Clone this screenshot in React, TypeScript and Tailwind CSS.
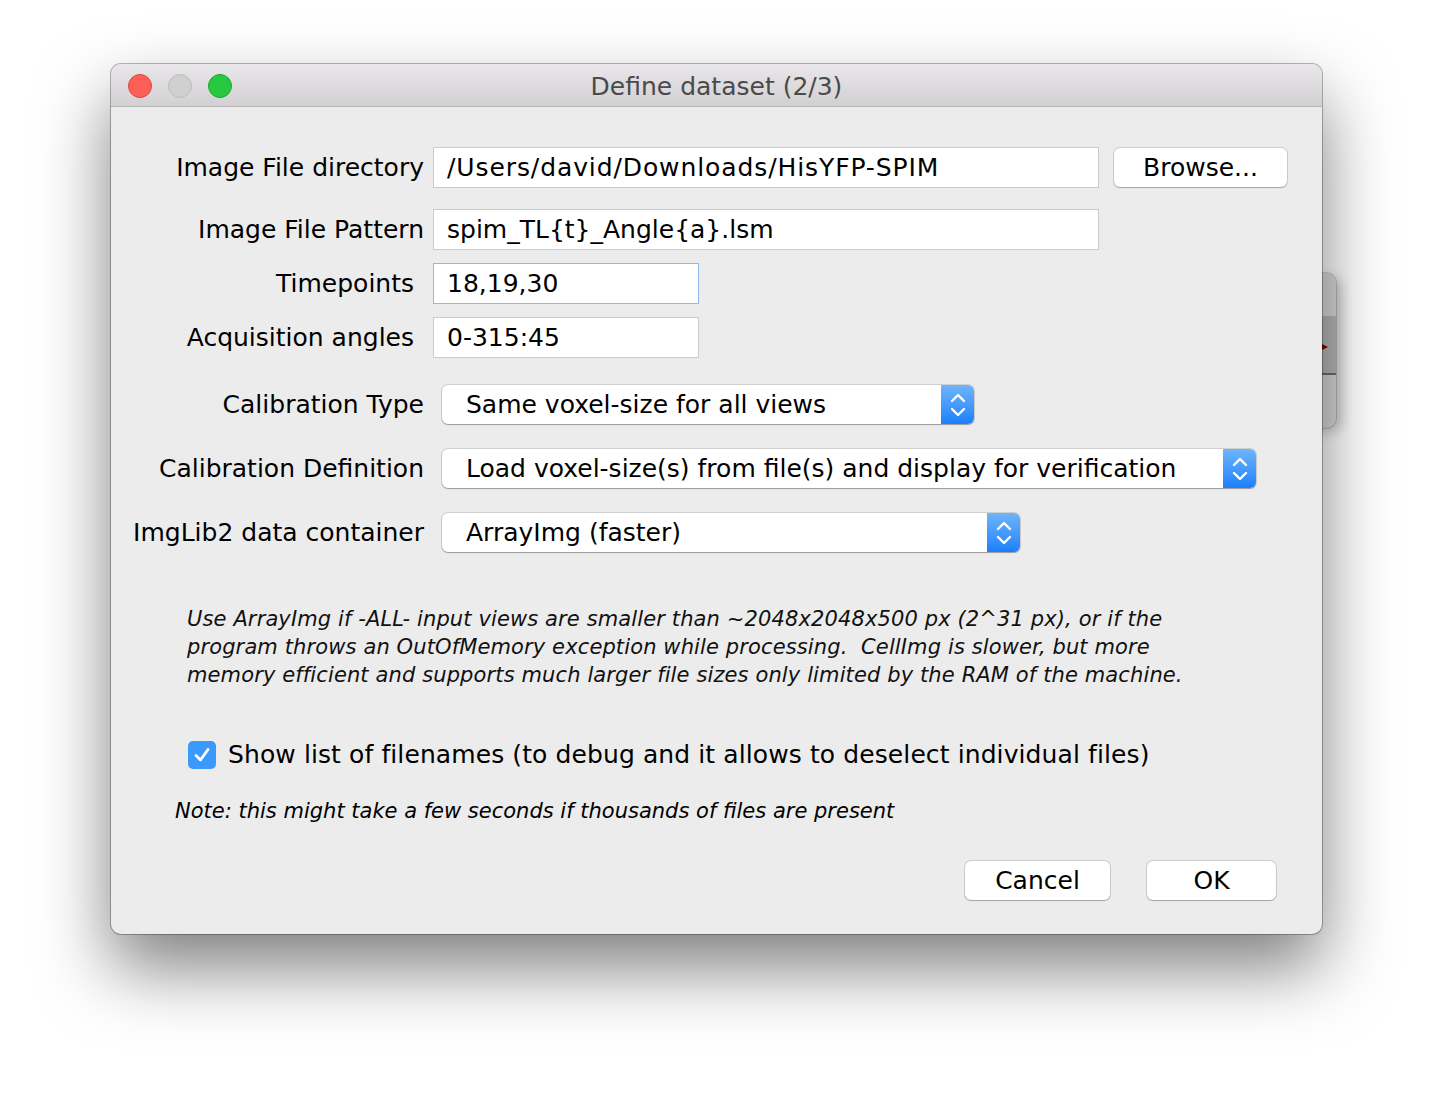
import React from "react";

const font = { fontFamily: '"DejaVu Sans", "Liberation Sans", sans-serif' };

const Chevrons = () => (
  <svg width="18" height="30" viewBox="0 0 18 30" fill="none" stroke="white" strokeWidth="2.4" strokeLinecap="round" strokeLinejoin="round">
    <path d="M3 11 L9 5 L15 11" />
    <path d="M3 19 L9 25 L15 19" />
  </svg>
);

const Field = ({ value, width, focused, tracking = "" }: { value: string; width: string; focused?: boolean; tracking?: string }) => (
  <div
    className={`${width} h-[41px] bg-white flex items-center pl-[13px] text-[25px] text-black border ${tracking} ${
      focused ? "border-[#8cb8ee]" : "border-[#cbcbcb]"
    }`}
  >
    {value}
  </div>
);

const Select = ({ value, width }: { value: string; width: string }) => (
  <div className={`${width} ml-[9px] h-[39px] flex rounded-[6px] bg-white shadow-[0_0_0_1px_rgba(0,0,0,0.12),0_1px_1px_rgba(0,0,0,0.25)]`}>
    <div className="flex-1 flex items-center pl-[24px] text-[25px] text-black">{value}</div>
    <div className="w-[33px] flex items-center justify-center rounded-r-[6px] bg-gradient-to-b from-[#6db5fb] to-[#1a7ffb]">
      <Chevrons />
    </div>
  </div>
);

const Button = ({ label, width }: { label: string; width: string }) => (
  <div
    className={`${width} h-[39px] flex items-center justify-center rounded-[6px] bg-white text-[25px] text-black shadow-[0_0_0_1px_rgba(0,0,0,0.13),0_1px_1px_rgba(0,0,0,0.2)]`}
  >
    {label}
  </div>
);

const Label = ({ text, pr = "pr-[9px]" }: { text: string; pr?: string }) => (
  <div className={`w-[322px] shrink-0 text-right text-[25px] text-black ${pr}`}>{text}</div>
);

export default function App() {
  return (
    <div className="relative w-[1434px] h-[1094px] bg-white overflow-hidden" style={font}>
      {/* window peeking from behind */}
      <div className="absolute left-[1290px] top-[273px] w-[46px] h-[155px] rounded-r-[10px] bg-[#d6d6d6] flex flex-col overflow-hidden shadow-[0_0_0_1px_rgba(0,0,0,0.15),6px_4px_12px_rgba(0,0,0,0.2)]">
        <div className="h-[44px] bg-[#dcdcdc] border-b border-[#bcbcbc]" />
        <div className="h-[58px] bg-[#b9b9b9] border-b-2 border-[#6e6e6e] relative">
          <div className="absolute left-[30px] top-[26px] w-0 h-0 border-y-[4px] border-y-transparent border-l-[8px] border-l-[#8a0000]" />
        </div>
        <div className="flex-1 bg-[#dadada]" />
      </div>

      <div className="relative ml-[111px] mt-[64px] w-[1211px] h-[870px] rounded-[10px] bg-[#ececec] flex flex-col overflow-hidden shadow-[0_0_0_1px_rgba(0,0,0,0.28),0_34px_70px_rgba(0,0,0,0.5)]">
        {/* title bar */}
        <div className="relative h-[43px] shrink-0 flex items-center justify-center bg-gradient-to-b from-[#e9e7e9] to-[#d2d0d2] border-b border-[#b4b4b4]">
          <div className="absolute left-[17px] top-[10px] flex gap-[16px]">
            <div className="w-[24px] h-[24px] rounded-full bg-[#fe5f57] border border-[#e0443e]" />
            <div className="w-[24px] h-[24px] rounded-full bg-[#d0d0d0] border border-[#bcbcbc]" />
            <div className="w-[24px] h-[24px] rounded-full bg-[#28c840] border border-[#1aab29]" />
          </div>
          <span className="text-[25px] text-[#4a4a4a] pt-[3px]">Define dataset (2/3)</span>
        </div>

        <div className="flex flex-col">
          <div className="flex items-center mt-[40px]">
            <Label text="Image File directory" />
            <Field value="/Users/david/Downloads/HisYFP-SPIM" width="w-[666px]" tracking="tracking-[0.9px]" />
            <div className="ml-[15px]">
              <Button label="Browse..." width="w-[173px]" />
            </div>
          </div>

          <div className="flex items-center mt-[21px]">
            <Label text="Image File Pattern" />
            <Field value="spim_TL{t}_Angle{a}.lsm" width="w-[666px]" />
          </div>

          <div className="flex items-center mt-[13px]">
            <Label text="Timepoints" pr="pr-[19px]" />
            <Field value="18,19,30" width="w-[266px]" focused />
          </div>

          <div className="flex items-center mt-[13px]">
            <Label text="Acquisition angles" pr="pr-[19px]" />
            <Field value="0-315:45" width="w-[266px]" />
          </div>

          <div className="flex items-center mt-[27px]">
            <Label text="Calibration Type" />
            <Select value="Same voxel-size for all views" width="w-[532px]" />
          </div>

          <div className="flex items-center mt-[25px]">
            <Label text="Calibration Definition" />
            <Select value="Load voxel-size(s) from file(s) and display for verification" width="w-[814px]" />
          </div>

          <div className="flex items-center mt-[25px]">
            <Label text="ImgLib2 data container" />
            <Select value="ArrayImg (faster)" width="w-[578px]" />
          </div>

          <p className="ml-[76px] mt-[53px] text-[21px] leading-[28px] italic text-[#111] tracking-[0.12px]">
            Use ArrayImg if -ALL- input views are smaller than ~2048x2048x500 px (2^31 px), or if the
            <br />
            program throws an OutOfMemory exception while processing.&nbsp; CellImg is slower, but more
            <br />
            memory efficient and supports much larger file sizes only limited by the RAM of the machine.
          </p>

          <div className="flex items-center ml-[77px] mt-[52px] h-[28px]">
            <div className="w-[28px] h-[28px] rounded-[5px] bg-[#3b99fc] flex items-center justify-center">
              <svg width="20" height="20" viewBox="0 0 20 20" fill="none" stroke="white" strokeWidth="2.8" strokeLinecap="round" strokeLinejoin="round">
                <path d="M4 10.5 L8.5 15 L16 4.5" />
              </svg>
            </div>
            <span className="ml-[12px] text-[25px] text-black tracking-[0.1px]">
              Show list of filenames (to debug and it allows to deselect individual files)
            </span>
          </div>

          <p className="ml-[64px] mt-[28px] text-[21px] leading-[28px] italic font-medium text-black">
            Note: this might take a few seconds if thousands of files are present
          </p>

          <div className="flex justify-end mt-[36px] pr-[46px] gap-[37px]">
            <Button label="Cancel" width="w-[145px]" />
            <Button label="OK" width="w-[129px]" />
          </div>
        </div>
      </div>
    </div>
  );
}
